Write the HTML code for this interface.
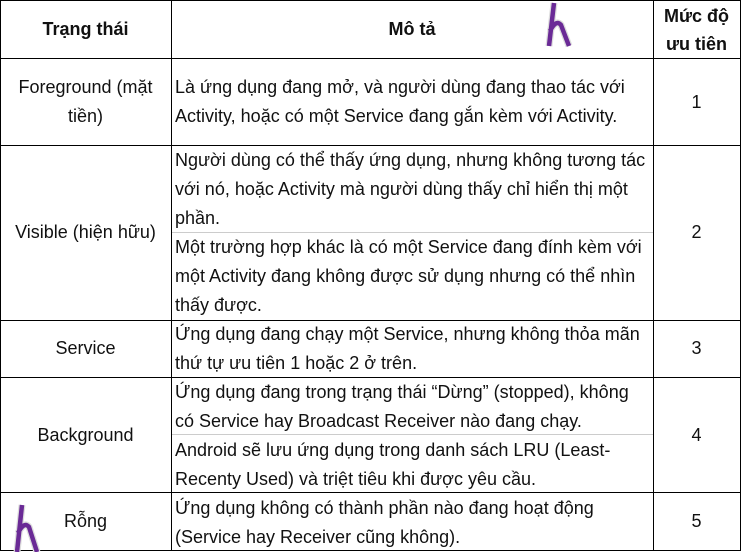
<!DOCTYPE html>
<html><head><meta charset="utf-8"><style>
html,body{margin:0;padding:0;background:#fff;width:741px;height:552px;overflow:hidden}
body{position:relative;font-family:"Liberation Sans",sans-serif;color:#111;font-size:18px}
.h{position:absolute;background:#000;height:1px}
.v{position:absolute;background:#000;width:1px}
.t{position:absolute;white-space:nowrap;line-height:29px;letter-spacing:0}
.c{text-align:center}
b{font-weight:bold}
</style></head><body>
<div class="h" style="left:0;top:0;width:741px"></div>
<div class="h" style="left:0;top:58px;width:741px"></div>
<div class="h" style="left:0;top:145px;width:741px"></div>
<div class="h" style="left:0;top:320px;width:741px"></div>
<div class="h" style="left:0;top:377px;width:741px"></div>
<div class="h" style="left:0;top:492px;width:741px"></div>
<div class="h" style="left:0;top:550px;width:741px"></div>
<div class="h" style="left:172px;top:232px;width:481px;background:#ccc"></div>
<div class="h" style="left:172px;top:434px;width:481px;background:#ccc"></div>
<div class="v" style="left:0;top:0;height:551px"></div>
<div class="v" style="left:171px;top:0;height:551px"></div>
<div class="v" style="left:653px;top:0;height:551px"></div>
<div class="v" style="left:740px;top:0;height:551px"></div>

<div class="t c" style="left:0;width:171px;top:15px"><b>Trạng thái</b></div>
<div class="t c" style="left:171px;width:482px;top:15px"><b>Mô tả</b></div>
<div class="t c" style="left:653px;width:87px;top:2px;line-height:28px"><b>Mức độ<br>ưu tiên</b></div>

<div class="t c" style="left:0;width:171px;top:73px">Foreground (mặt<br>tiền)</div>
<div class="t" style="left:175px;top:73px">Là ứng dụng đang mở, và người dùng đang thao tác với<br>Activity, hoặc có một Service đang gắn kèm với Activity.</div>
<div class="t c" style="left:653px;width:87px;top:88px">1</div>

<div class="t c" style="left:0;width:171px;top:218px">Visible (hiện hữu)</div>
<div class="t" style="left:175px;top:146px">Người dùng có thể thấy ứng dụng, nhưng không tương tác<br>với nó, hoặc Activity mà người dùng thấy chỉ hiển thị một<br>phần.</div>
<div class="t" style="left:175px;top:233px">Một trường hợp khác là có một Service đang đính kèm với<br>một Activity đang không được sử dụng nhưng có thể nhìn<br>thấy được.</div>
<div class="t c" style="left:653px;width:87px;top:218px">2</div>

<div class="t c" style="left:0;width:171px;top:334px">Service</div>
<div class="t" style="left:175px;top:320px">Ứng dụng đang chạy một Service, nhưng không thỏa mãn<br>thứ tự ưu tiên 1 hoặc 2 ở trên.</div>
<div class="t c" style="left:653px;width:87px;top:334px">3</div>

<div class="t c" style="left:0;width:171px;top:421px">Background</div>
<div class="t" style="left:175px;top:378px">Ứng dụng đang trong trạng thái “Dừng” (stopped), không<br>có Service hay Broadcast Receiver nào đang chạy.</div>
<div class="t" style="left:175px;top:436px">Android sẽ lưu ứng dụng trong danh sách LRU (Least-<br>Recenty Used) và triệt tiêu khi được yêu cầu.</div>
<div class="t c" style="left:653px;width:87px;top:421px">4</div>

<div class="t c" style="left:0;width:171px;top:507px">Rỗng</div>
<div class="t" style="left:175px;top:494px">Ứng dụng không có thành phần nào đang hoạt động<br>(Service hay Receiver cũng không).</div>
<div class="t c" style="left:653px;width:87px;top:507px">5</div>

<svg style="position:absolute;left:540px;top:0" width="40" height="52" viewBox="0 0 40 52">
<path d="M14 3 L9 46 M10 31 Q16 19 21 25 L29 46" fill="none" stroke="#ddd" stroke-width="7" stroke-linejoin="round"/>
<path d="M14 3 L9 46 M10 31 Q16 19 21 25 L29 46" fill="none" stroke="#6a2a96" stroke-width="4.5" stroke-linejoin="round"/>
</svg>
<svg style="position:absolute;left:8px;top:502px" width="40" height="52" viewBox="0 0 40 52">
<path d="M14 3 L9 50 M10 31 Q16 19 21 25 L29 50" fill="none" stroke="#ddd" stroke-width="7" stroke-linejoin="round"/>
<path d="M14 3 L9 50 M10 31 Q16 19 21 25 L29 50" fill="none" stroke="#6a2a96" stroke-width="4.5" stroke-linejoin="round"/>
</svg>
</body></html>
